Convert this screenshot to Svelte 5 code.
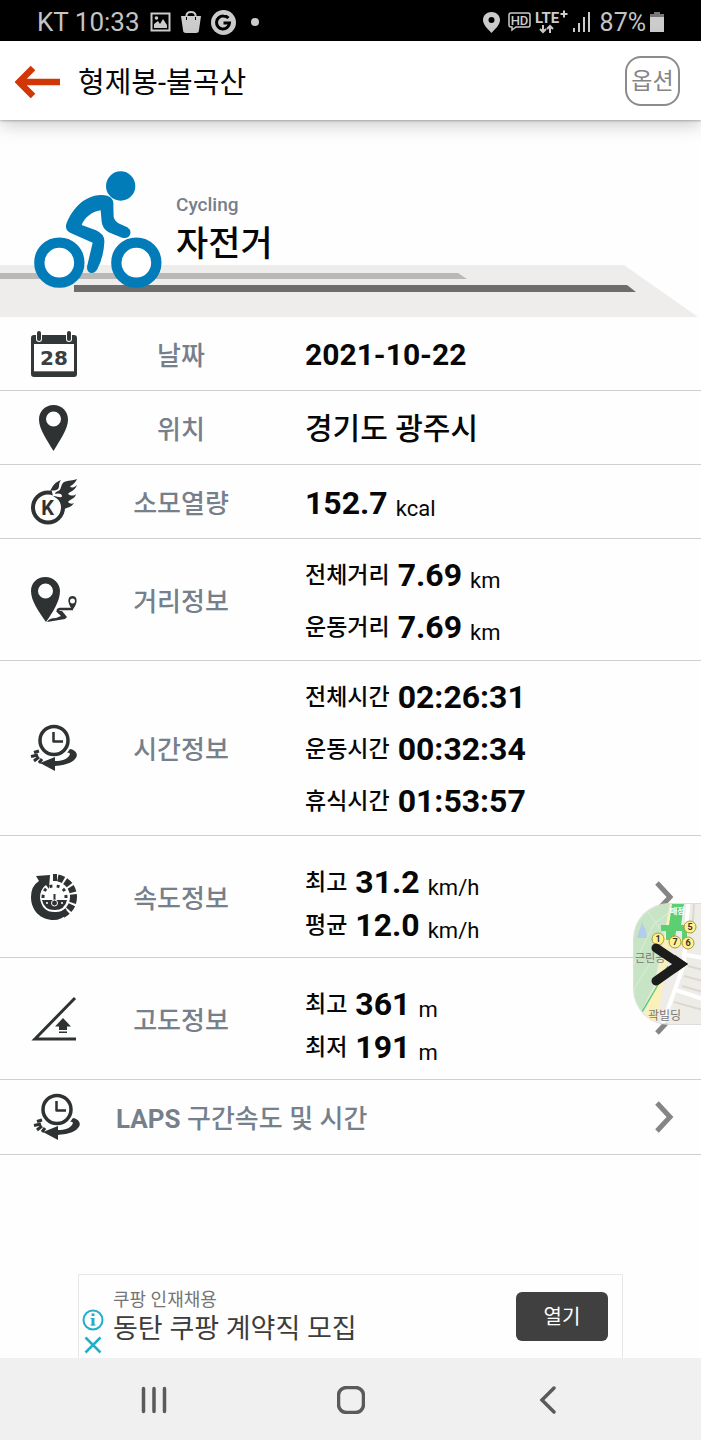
<script>
  const records = [
    { icon: 'calendar', label: '날짜', lines: [{ text: '2021-10-22' }] },
    { icon: 'pin', label: '위치', lines: [{ place: '경기도 광주시' }] },
    { icon: 'calorie', label: '소모열량', lines: [{ value: '152.7', unit: 'kcal' }] },
    {
      icon: 'route', label: '거리정보', size: 'mid',
      lines: [
        { name: '전체거리', value: '7.69', unit: 'km' },
        { name: '운동거리', value: '7.69', unit: 'km' }
      ]
    },
    {
      icon: 'clock', label: '시간정보', size: 'tall',
      lines: [
        { name: '전체시간', value: '02:26:31' },
        { name: '운동시간', value: '00:32:34' },
        { name: '휴식시간', value: '01:53:57' }
      ]
    },
    {
      icon: 'speed', label: '속도정보', size: 'mid', more: true, map: true,
      lines: [
        { name: '최고', value: '31.2', unit: 'km/h' },
        { name: '평균', value: '12.0', unit: 'km/h' }
      ]
    },
    {
      icon: 'slope', label: '고도정보', size: 'mid', more: true,
      lines: [
        { name: '최고', value: '361', unit: 'm' },
        { name: '최저', value: '191', unit: 'm' }
      ]
    }
  ];
</script>

{#snippet glyph(kind)}
  <svg class="glyph" viewBox="0 0 46 46" aria-hidden="true">
    {#if kind === 'calendar'}
      <rect x="0" y="4" width="46" height="42" rx="3" fill="#323738" />
      <rect x="3" y="13" width="40" height="27" fill="#fff" />
      <rect x="3" y="40" width="40" height="1" fill="#777" />
      <rect x="5" y="-1" width="6" height="12" rx="3" fill="#fff" />
      <rect x="35" y="-1" width="6" height="12" rx="3" fill="#fff" />
      <rect x="6" y="0" width="4" height="10" rx="2" fill="#323738" />
      <rect x="36" y="0" width="4" height="10" rx="2" fill="#323738" />
      <text x="23" y="34" text-anchor="middle" font-family="DejaVu Sans" font-size="20" font-weight="700" fill="#3b3f40">28</text>
    {:else if kind === 'pin'}
      <path fill-rule="evenodd" fill="#2e3233" d="M22.500 0C14 0 8 6.500 8 14.500C8 24 16 35 22.500 46C29 35 37 24 37 14.500C37 6.500 31 0 22.500 0ZM22.500 6.500a7.500 7.500 0 1 1 0 15a7.500 7.500 0 1 1 0-15Z" />
    {:else if kind === 'calorie'}
      <circle cx="17" cy="28.500" r="15" fill="none" stroke="#2e3233" stroke-width="4" />
      <path d="M20 9L22 17L30 22L33 31L40 30L40 12L28 6Z" fill="#fff" />
      <path fill="#2e3233" d="M19 12C21 9 22 4 30 1C27 5 29 8 27 10C25 12 22 11 19 12Z" />
      <path fill="#2e3233" d="M27 12C31 11 29 6 33 3C37 1 42 2 46 0C44 5 40 6 39 8C42 9 44 8 46 6C44 12 39 12 37 15C40 17 43 17 45 15C44 20 39 20 37 23C39 25 41 25 43 24C40 29 36 28 34 30L30 39C34 30 31 23 25 19L22 17C27 17 30 20 31 17C31 14 26 14 24 15Q24 13 27 12Z" />
      <text x="16.500" y="36" text-anchor="middle" font-family="Roboto" font-size="20" font-weight="700" fill="#2e3233">K</text>
    {:else if kind === 'route'}
      <path fill-rule="evenodd" fill="#2e3233" d="M14.500 0C6 0 0 6 0 14C0 24 8 35 15 45C22 35 29 24 29 14C29 6 22 0 14.500 0ZM14.500 6.500a7.500 7.500 0 1 1 0 15a7.500 7.500 0 1 1 0-15Z" />
      <path fill="none" stroke="#2e3233" stroke-width="2.500" d="M42 32H29Q25 33 28 35L33 39" />
      <path fill="#2e3233" d="M25 34L31 34L36 40L34 42L16 45Q18 41 25 41L30 39Z" />
      <path fill-rule="evenodd" fill="#2e3233" d="M41.500 19C38 19 37 22 37.500 25C38 28 40 31 41.500 33C43 31 45 28 45.500 25C46 22 45 19 41.500 19ZM41.500 21.500a2.500 2.500 0 1 1 0 5a2.500 2.500 0 1 1 0-5Z" />
    {:else if kind === 'clock'}
      <circle cx="23" cy="15.500" r="14" fill="none" stroke="#2e3233" stroke-width="3.500" />
      <path fill="none" stroke="#2e3233" stroke-width="2.500" stroke-linejoin="round" d="M22.500 7V16.500H32" />
      <path fill="#2e3233" d="M39 24C45 25 48 30 44 34C40 39 32 40 24 41V46L9 38L24 32V36C31 36 36 34 38 31C40 28 38 27 36 28Z" />
      <path fill="none" stroke="#2e3233" stroke-width="3" d="M8 26L3 27.500M7 30L0 31.500M8 32L3 36M11 34L8 38" />
    {:else if kind === 'speed'}
      <circle cx="23" cy="23" r="19.500" fill="none" stroke="#2e3233" stroke-width="7" stroke-dasharray="5.500 1.800" pathLength="112" />
      <path d="M7 0H23V23L34 46H0V0Z" fill="#fff" />
      <path fill="#2e3233" d="M5 2L19 1L18 15L15 11Q9 15 9 24Q11 39 25 38Q31 38 35 34L36 40Q30 46 23 46C9 46 0 36 0 23Q0 12 8 7Z" />
      <path fill="none" stroke="#2e3233" stroke-width="7" d="M22 3.500H26" />
      <path fill="none" stroke="#2e3233" stroke-width="3" stroke-dasharray="3 4" d="M12 24Q12 12 23.500 12Q35 12 35 24" />
      <path fill="#2e3233" d="M11 26H36Q34 36 23.500 36Q13 36 11 26Z" />
      <path fill="none" stroke="#2e3233" stroke-width="2" d="M23.500 20V29" />
      <circle cx="23.500" cy="29" r="3" fill="none" stroke="#fff" />
      <path stroke="#fff" stroke-width="1.500" d="M15 29H17M30 29H32" />
    {:else if kind === 'slope'}
      <path fill="none" stroke="#2e3233" stroke-width="3" d="M44 2L4 43H45" />
      <path fill="#2e3233" d="M32 22L40 30.500H36V34H28V30.500H24ZM28 35.500H36V37H28Z" />
    {/if}
  </svg>
{/snippet}

{#snippet chevron()}
  <svg class="chevron" viewBox="0 0 20 34" aria-hidden="true"><path d="M3 3L16 17L3 31" /></svg>
{/snippet}

<div class="page">
  <div class="status">
    <div class="group">
      <span class="carrier">KT 10:33</span>
      <svg width="21" height="20" viewBox="0 0 21 20" aria-hidden="true">
        <path fill="none" stroke="#ccc" stroke-width="2" d="M1.500 1.500H19.500V18.500H1.500Z" />
        <path fill="#ccc" d="M4 16V12L8 9L10 12L13 7L17 13V16Z" /><circle cx="6.500" cy="6" r="1.800" fill="#ccc" />
      </svg>
      <svg width="20" height="22" viewBox="0 0 20 22" aria-hidden="true">
        <path fill="#ccc" d="M0 5H20L18 19Q18 22 15 22H5Q2 22 2 19Z" /><path fill="none" stroke="#ccc" stroke-width="2" d="M5.500 6V4Q6 1 10 1Q14 1 14.500 4V6" />
        <path fill="none" stroke="#000" stroke-width="1" d="M5.500 6V9M14.500 6V9" />
      </svg>
      <svg width="25" height="25" viewBox="0 0 25 25" aria-hidden="true">
        <circle cx="12.500" cy="12.500" r="12.500" fill="#ccc" />
        <path fill="none" stroke="#000" stroke-width="3" d="M17.500 8Q15.500 6 12.500 6A6.500 6.500 0 1 0 18.500 13H12.500" />
      </svg>
      <span class="dot"></span>
    </div>
    <div class="group right">
      <svg width="17" height="21" viewBox="0 0 17 21" aria-hidden="true">
        <path fill="#ccc" fill-rule="evenodd" d="M8.500 0C4 0 0 3 0 8C0 13 5 17 8.500 21C12 17 17 13 17 8C17 3 13 0 8.500 0ZM8.500 5a3 3 0 1 1 0 6a3 3 0 1 1 0-6Z" />
      </svg>
      <svg class="hd" width="23" height="20" viewBox="0 0 23 20" aria-hidden="true">
        <path fill="none" stroke="#ccc" stroke-width="1.500" d="M3 1H20Q22 1 22 3V13Q22 15 20 15H8L4 18V15H3Q1 15 1 13V3Q1 1 3 1Z" />
        <text x="11.500" y="13" text-anchor="middle" font-family="Roboto" font-size="13" font-weight="500" fill="#ccc">HD</text>
      </svg>
      <svg width="33" height="26" viewBox="0 0 33 26" aria-hidden="true">
        <text x="0" y="14" font-family="Roboto" font-size="15" font-weight="700" fill="#ccc">LTE</text>
        <path stroke="#ccc" stroke-width="2" d="M25.500 5H32.500M29 1.500V8.500" />
        <path fill="none" stroke="#ccc" stroke-width="2" d="M8 16V23M5 20L8 23L11 20M15 24V17M12 20L15 17L18 20" />
      </svg>
      <svg width="19" height="20" viewBox="0 0 19 20" aria-hidden="true">
        <path stroke="#ccc" stroke-width="2" d="M2 20V16M7 20V11M12 20V5M17 20V0" />
      </svg>
      <span class="charge">87%</span>
      <svg width="14" height="20" viewBox="0 0 14 20" aria-hidden="true">
        <path fill="#777" d="M4 0H10V2H14V6H0V2H4Z" /><path fill="#ccc" d="M0 5H14V20H0Z" />
      </svg>
    </div>
  </div>

  <header>
    <button class="back" aria-label="뒤로">
      <svg width="46" height="34" viewBox="0 0 46 34" aria-hidden="true">
        <path fill="none" stroke="#d23506" stroke-width="6.500" d="M45 18H4M18 4L4 18L18 32" />
      </svg>
    </button>
    <h1>형제봉-불곡산</h1>
    <button class="option">옵션</button>
  </header>

  <main>
    <section class="hero">
      <svg class="road" viewBox="0 0 701 52" preserveAspectRatio="none" aria-hidden="true">
        <path fill="#eeedeb" d="M0 0H624L698 52H0Z" />
        <path fill="#b9bab8" d="M0 8H458L467 14H0Z" />
        <path fill="#6d6e6c" d="M74 20H627L636 27H74Z" />
      </svg>
      <svg class="cyclist" viewBox="102 62 384 354" aria-hidden="true">
        <circle cx="362" cy="107" r="44" fill="#027bb9" />
        <circle cx="178" cy="337" r="60" fill="#fff" stroke="#027bb9" stroke-width="31" />
        <circle cx="409" cy="337" r="60" fill="#fff" stroke="#027bb9" stroke-width="31" />
        <path fill="#027bb9" d="M198 225C210 185 250 133 305 134C335 135 342 150 340 165L341 200Q344 214 360 221L382 231Q395 240 390 253Q384 266 366 262L326 246Q308 236 305 215L302 180C276 183 252 204 245 224L288 240Q315 252 313 276Q311 320 292 356Q285 370 272 368Q258 362 262 345L278 277L212 248Q196 240 198 225Z" />
      </svg>
      <div class="sport">
        <p>Cycling</p>
        <h2>자전거</h2>
      </div>
    </section>

    <dl>
      {#each records as row}
        <div class={['row', row.size]}>
          {@render glyph(row.icon)}
          <dt>{row.label}</dt>
          <dd class={{ tight: row.more }}>
            {#each row.lines as line}
              <div class="line">
                {#if line.text}<b class="text">{line.text}</b>{/if}
                {#if line.place}<span class="place">{line.place}</span>{/if}
                {#if line.name}<span class="name">{line.name}</span>{/if}
                {#if line.value}<b>{line.value}</b>{/if}
                {#if line.unit}<span class="unit">{line.unit}</span>{/if}
              </div>
            {/each}
          </dd>
          {#if row.more}
            <button class="more" aria-label={row.label}>{@render chevron()}</button>
          {/if}
          {#if row.map}
            <button class="map" aria-label="지도">
              <svg width="67" height="120" viewBox="0 0 67 120" aria-hidden="true">
                <rect width="69" height="122" fill="#eeece7" />
                <path fill="#c7e4c4" d="M0 0H36L26 52L20 82L0 122Z" />
                <path fill="none" stroke="#dbeed7" d="M0 60L20 20L36 8M0 85L22 50M8 0L30 30" />
                <path fill="#b4cdec" d="M3 34L8 18L12 27L13 34Z" />
                <path fill="#faf0b8" d="M36 0H47L32 62L22 122H6L22 82Z" />
                <path fill="none" stroke="#fff" stroke-width="4" d="M54 0L50 60L28 122M69 54L48 50M69 95L42 86" />
                <path fill="none" stroke="#dcd8d0" stroke-width="2" d="M54 62L69 66M50 72L69 77M48 82L69 88M40 98L69 106M60 0L58 30" />
                <path fill="none" stroke="#5ccf72" stroke-width="1.500" d="M34 62Q22 85 8 108" />
                <path fill="#5ccf72" d="M38 0H50L47 21H53V36H48V27H42L41 36H32V27H27V21H35Z" />
                <g stroke="#a79b37" fill="#fff193">
                  <circle cx="56" cy="23" r="6" /><circle cx="24" cy="35" r="6" /><circle cx="41" cy="38" r="6" /><circle cx="54" cy="39" r="6" />
                </g>
                <g font-family="Roboto" font-weight="700" font-size="9" text-anchor="middle" fill="#333">
                  <text x="56" y="26">5</text><text x="24" y="38">1</text><text x="41" y="41">7</text><text x="54" y="42">6</text>
                </g>
                <text x="36" y="10" font-family="Noto Sans CJK KR" font-size="8" font-weight="700" fill="#fff">매점</text>
                <g font-family="Noto Sans CJK KR" font-size="11" fill="#777">
                  <text x="1" y="58">근린공</text><text x="14" y="116" font-size="12">곽빌딩</text>
                </g>
                <path fill="none" stroke="#1c1c1c" stroke-width="9" stroke-linecap="round" d="M22 44L46 60L22 77" />
                <path fill="#1c1c1c" d="M41 51L54 60L41 69Z" />
              </svg>
            </button>
          {/if}
        </div>
      {/each}
    </dl>
    <button class="laps">
      {@render glyph('clock')}
      <span><b>LAPS</b> 구간속도 및 시간</span>
      {@render chevron()}
    </button>
  </main>

  <aside class="ad">
    <div class="marks">
      <button aria-label="광고 정보">
        <svg width="22" height="22" viewBox="0 0 22 22" aria-hidden="true">
          <circle cx="11" cy="11" r="9.500" fill="none" stroke="#22aecb" stroke-width="2" />
          <path fill="none" stroke="#22aecb" stroke-width="3" d="M11 4.500V7M11 9V16.500" />
          <path stroke="#22aecb" stroke-width="1" d="M8.500 9.500H11M8.500 16H13.500" />
        </svg>
      </button>
      <button aria-label="광고 닫기">
        <svg width="18" height="18" viewBox="0 0 18 18" aria-hidden="true">
          <path stroke="#22aecb" stroke-width="2.500" d="M1.500 1.500L16.500 16.500M16.500 1.500L1.500 16.500" />
        </svg>
      </button>
    </div>
    <div class="copy">
      <p>쿠팡 인재채용</p>
      <strong>동탄 쿠팡 계약직 모집</strong>
    </div>
    <button class="open">열기</button>
  </aside>

  <nav>
    <button aria-label="최근 앱">
      <svg width="28" height="28" viewBox="0 0 28 28" aria-hidden="true"><path d="M3.500 2.500V25.500M14 2.500V25.500M24.500 2.500V25.500" /></svg>
    </button>
    <button aria-label="홈">
      <svg width="28" height="28" viewBox="0 0 28 28" aria-hidden="true"><rect x="1.500" y="1.500" width="25" height="25" rx="8" /></svg>
    </button>
    <button aria-label="이전">
      <svg width="28" height="28" viewBox="0 0 28 28" aria-hidden="true"><path d="M20 2L8 14L20 26" /></svg>
    </button>
  </nav>
</div>

<style>
  :global(body) { background: #fefefe; }
  .page {
    display: flex;
    flex-direction: column;
    min-height: 100vh;
    font-family: Roboto, "Noto Sans CJK KR", sans-serif;
    color: #070707;
    overflow-x: hidden;
  }
  button { padding: 0; border: 0; background: none; font: inherit; color: inherit; cursor: pointer; }
  svg { display: block; flex: none; }
  h1, h2, p, dl, dd { margin: 0; }

  .status {
    display: flex;
    align-items: center;
    justify-content: space-between;
    height: 41px;
    padding: 3px 37px 0;
    background: #000;
    color: #c4c4c4;
    box-sizing: border-box;
  }
  .carrier { font-size: 26px; }
  .charge { margin-left: 5px; font-size: 25px; }
  .group { display: flex; align-items: center; gap: 10px; }
  .group.right { gap: 4px; }
  .hd { margin-left: 4px; }
  .dot { width: 8px; height: 8px; margin-left: 5px; border-radius: 50%; background: #ccc; }

  header {
    display: flex;
    align-items: center;
    gap: 17px;
    height: 79px;
    padding: 0 21px 0 15px;
    background: #fff;
    box-shadow: 0 4px 18px rgb(0 0 0 / 22%), 0 1px 2px rgb(0 0 0 / 25%);
    box-sizing: border-box;
    z-index: 1;
  }
  h1 { flex: 1; padding-top: 4px; font-size: 29px; font-weight: 400; line-height: 40px; }
  .option {
    width: 55px;
    height: 50px;
    padding-top: 3px;
    border: 2px solid #8b8b8b;
    border-radius: 16px;
    font-size: 23px;
    line-height: 40px;
    color: #858585;
  }

  .hero { position: relative; display: flex; align-items: flex-end; gap: 14px; height: 197px; padding: 0 34px 28px; box-sizing: border-box; }
  .road { position: absolute; left: 0; bottom: 0; width: 100%; height: 52px; }
  .cyclist { position: relative; width: 128px; height: 118px; }
  .sport { position: relative; padding-bottom: 20px; }
  .sport p { margin-bottom: 4px; font-size: 19px; font-weight: 500; line-height: 24px; color: #76808b; }
  .sport h2 { font-size: 35px; font-weight: 500; line-height: 48px; }

  .row {
    position: relative;
    display: grid;
    grid-template-columns: 46px 208px 1fr auto;
    align-items: center;
    min-height: 74px;
    padding: 0 27px 0 31px;
    border-bottom: 1px solid #cfcfcf;
    box-sizing: border-box;
  }
  .mid { min-height: 122px; }
  .tall { min-height: 175px; }
  .glyph { width: 46px; height: 46px; overflow: visible; }
  dt { padding-top: 4px; text-align: center; font-size: 26px; font-weight: 500; line-height: 40px; color: #76808b; }
  dd { display: grid; gap: 12px; padding: 2px 0 0 20px; }
  dd.tight { gap: 3px; padding-top: 13px; }
  .line { display: flex; align-items: flex-end; gap: 8px; }
  .line b { font-size: 32px; font-weight: 700; line-height: 40px; }
  .line .text { font-size: 30px; }
  .place { font-size: 30px; font-weight: 500; line-height: 38px; }
  .name { font-size: 23px; font-weight: 500; line-height: 38px; }
  .unit { font-size: 22px; line-height: 29px; }
  .chevron { width: 20px; height: 34px; }
  .chevron path { fill: none; stroke: #858585; stroke-width: 5; }
  .map {
    position: absolute;
    top: 67px;
    right: 0;
    z-index: 1;
    border: 1px solid #ddd;
    border-right: 0;
    border-radius: 36px 0 0 36px;
    overflow: hidden;
  }

  .laps {
    display: flex;
    align-items: center;
    width: 100%;
    height: 75px;
    padding: 0 27px 0 34px;
    border-bottom: 1px solid #cfcfcf;
    color: #76808b;
    font-size: 26px;
    font-weight: 500;
    line-height: 40px;
    text-align: left;
  }
  .laps span { flex: 1; padding: 4px 0 0 36px; }

  .ad {
    display: flex;
    align-items: flex-start;
    width: 545px;
    max-width: 100%;
    height: 84px;
    margin: auto auto 0;
    border: 1px solid #e4e8e8;
    border-bottom: 0;
    box-sizing: border-box;
    color: #3c3c3c;
  }
  .marks { display: grid; justify-items: center; gap: 5px; padding: 34px 9px 0 3px; }
  .copy { flex: 1; padding-top: 13px; }
  .copy p { font-size: 18px; line-height: 24px; color: #757575; }
  .copy strong { display: block; font-size: 27px; font-weight: 400; line-height: 34px; }
  .open {
    width: 92px;
    height: 49px;
    margin: 17px 14px 0 0;
    padding-bottom: 3px;
    border-radius: 6px;
    background: #404040;
    color: #fff;
    font-size: 20px;
  }

  nav { display: flex; justify-content: center; gap: 169px; height: 82px; padding-top: 2px; background: #f0f0f0; box-sizing: border-box; }
  nav svg { fill: none; stroke: #5a5a5a; stroke-width: 3.5; stroke-linecap: round; }
</style>
